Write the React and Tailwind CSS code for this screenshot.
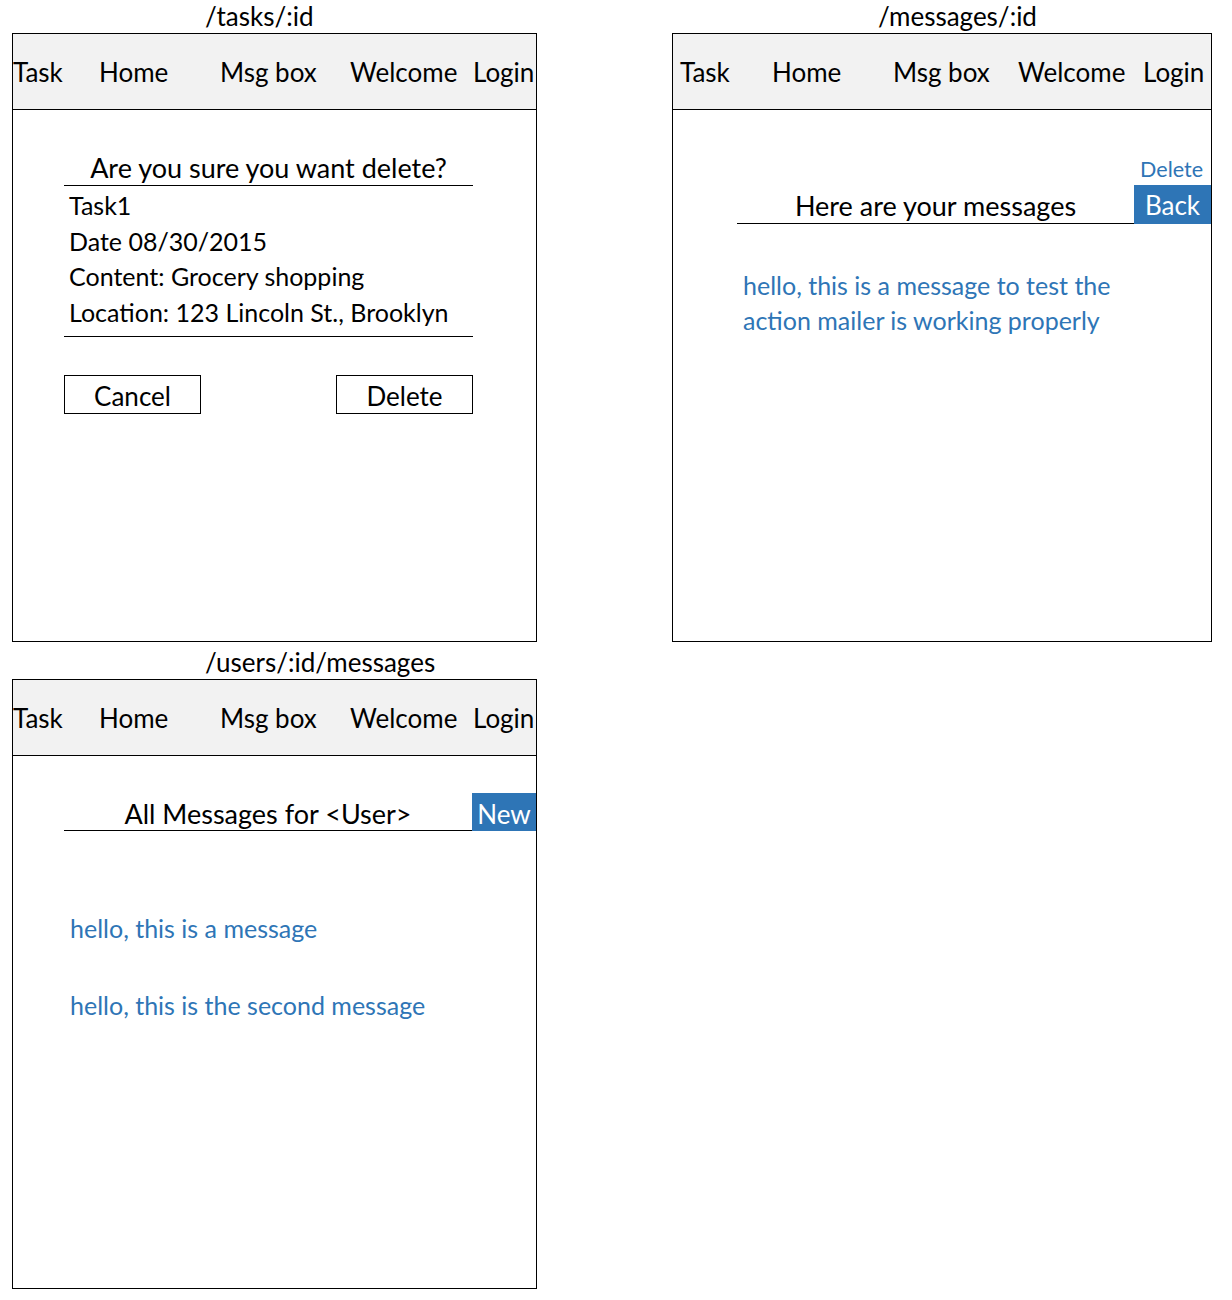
const NAV_A = [
  ['Task', 'w-[86px]'],
  ['Home', 'w-[121px]'],
  ['Msg box', 'w-[130px]'],
  ['Welcome', 'w-[123px]'],
  ['Login', 'flex-1'],
]

const NAV_B = [
  ['Task', 'w-[92px]'],
  ['Home', 'w-[121px]'],
  ['Msg box', 'w-[125px]'],
  ['Welcome', 'w-[125px]'],
  ['Login', 'flex-1'],
]

function NavBar({ items, inset = '' }) {
  return (
    <div className={`flex items-center h-[76px] bg-[#f2f2f2] border-b border-black text-[26px] leading-none whitespace-nowrap ${inset}`}>
      {items.map(([label, w]) => (
        <span key={label} className={w}>{label}</span>
      ))}
    </div>
  )
}

function Screen({ route, routeInset, nav, inset, width, height, children }) {
  return (
    <div className={width}>
      <div className={`h-[33px] ${routeInset} text-[26px] leading-[33px] whitespace-nowrap`}>{route}</div>
      <div className={`${height} border border-black overflow-hidden bg-white`}>
        <NavBar items={nav} inset={inset} />
        {children}
      </div>
    </div>
  )
}

function DeleteTask() {
  return (
    <div className="ml-[51px] w-[409px] pt-[40px]">
      <div className="h-[36px] border-b border-black text-center text-[27px] leading-[35px]">Are you sure you want delete?</div>
      <div className="pt-[2px] pb-[6px] pl-[5px] border-b border-black leading-[35.5px]">
        <p>Task1</p>
        <p>Date 08/30/2015</p>
        <p>Content: Grocery shopping</p>
        <p>Location: 123 Lincoln St., Brooklyn</p>
      </div>
      <div className="flex justify-between mt-[38px] text-[26px]">
        <button className="w-[137px] h-[39px] border border-black leading-none pt-[2px]">Cancel</button>
        <button className="w-[137px] h-[39px] border border-black leading-none pt-[2px]">Delete</button>
      </div>
    </div>
  )
}

function ShowMessage() {
  return (
    <div className="pt-[44px]">
      <div className="h-[31px] pr-[8px] text-right text-[21.5px] leading-[30px] text-[#2e75b6]">Delete</div>
      <div className="flex ml-[64px] h-[39px] text-[27px]">
        <div className="w-[397px] border-b border-black text-center leading-[41px]">Here are your messages</div>
        <div className="w-[77px] bg-[#2e75b6] text-white text-center text-[26px] leading-[41px]">Back</div>
      </div>
      <p className="ml-[70px] mt-[44px] leading-[35px] text-[#2e75b6]">
        hello, this is a message to test the<br />
        action mailer is working properly
      </p>
    </div>
  )
}

function UserMessages() {
  return (
    <div className="pt-[37px]">
      <div className="flex ml-[51px] h-[38px] text-[27px]">
        <div className="w-[408px] border-b border-black text-center leading-[42px]">All Messages for &lt;User&gt;</div>
        <div className="w-[64px] bg-[#2e75b6] text-white text-center text-[26px] leading-[42px]">New</div>
      </div>
      <div className="ml-[57px] mt-[80px] leading-[35px] text-[#2e75b6]">
        <p>hello, this is a message</p>
        <p className="mt-[42px]">hello, this is the second message</p>
      </div>
    </div>
  )
}

export default function App() {
  return (
    <div
      className="w-[1232px] h-[1300px] bg-white text-black text-[25px] flex pl-[12px]"
      style={{ fontFamily: 'Lato, "Liberation Sans", sans-serif' }}
    >
      <div className="flex flex-col gap-[4px]">
        <Screen route="/tasks/:id" routeInset="pl-[193px]" nav={NAV_A} width="w-[525px]" height="h-[609px]">
          <DeleteTask />
        </Screen>
        <Screen route="/users/:id/messages" routeInset="pl-[193px]" nav={NAV_A} width="w-[525px]" height="h-[610px]">
          <UserMessages />
        </Screen>
      </div>
      <div className="ml-[135px]">
        <Screen route="/messages/:id" routeInset="pl-[206px]" nav={NAV_B} inset="pl-[7px]" width="w-[540px]" height="h-[609px]">
          <ShowMessage />
        </Screen>
      </div>
    </div>
  )
}
